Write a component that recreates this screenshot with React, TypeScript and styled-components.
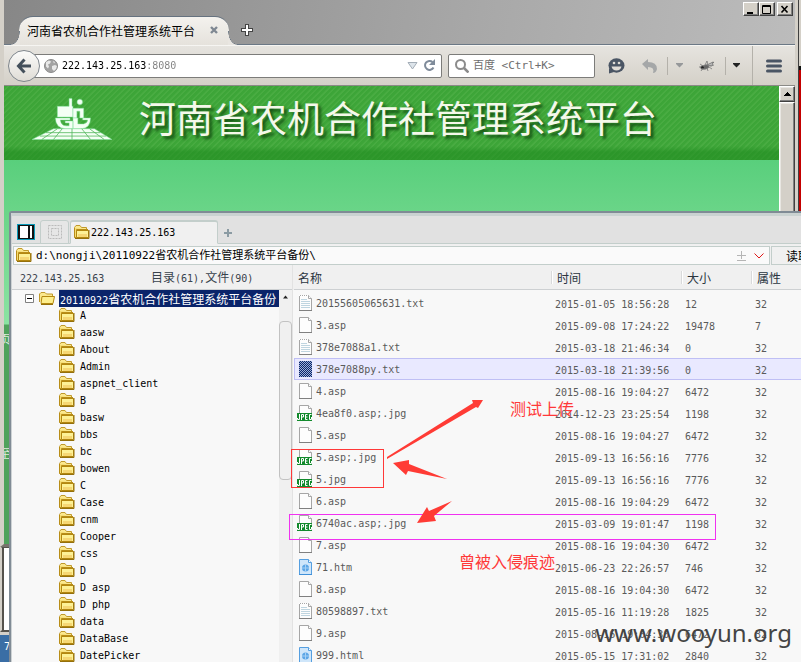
import React from "react";
import styled, { createGlobalStyle, css } from "styled-components";

const cjk = '"Noto Sans CJK SC", sans-serif';
const mono = `"DejaVu Sans Mono", ${cjk}`;

const GlobalStyle = createGlobalStyle`
  * { box-sizing: border-box; }
  html, body { margin: 0; padding: 0; height: 100%; }
  body { overflow: hidden; font: 12px/17px ${cjk}; color: #000; }
  #root { height: 100%; }
  button, input { font: inherit; color: inherit; margin: 0; padding: 0; border: 0; background: none; outline: none; }
  ul { list-style: none; margin: 0; padding: 0; }
`;

/* ---------- mixed script text ---------- */

const Latin = styled.span`
  font-family: ${mono};
  font-size: 10px;
`;

function Text({ children }: { children: string }) {
  return (
    <>
      {children.split(/([\x20-\x7f]+)/).map((run, i) =>
        i % 2 ? <Latin key={i}>{run}</Latin> : run
      )}
    </>
  );
}

/* ---------- desktop ---------- */

const Desktop = styled.div`
  position: relative;
  height: 100%;
  min-height: 100vh;
  overflow: hidden;
  background: #d4d0c8;
`;

const ConsoleWindow = styled.div`
  position: absolute;
  top: 0;
  right: 0;
  width: 3px;
  height: 220px;
  background: linear-gradient(#d4d0c8 66px, #111 66px 70px, #c40000 70px);
`;

const BackWindow = styled.div`
  position: absolute;
  top: 546px;
  left: 0;
  width: 60px;
  bottom: 30px;
  border: 2px solid #55524c;
  border-left: 2px solid #d4d0c8;
  box-shadow: inset 2px 0 #55524c;
  background: #fff;
`;

const Taskbar = styled.div`
  position: absolute;
  left: 0;
  right: 0;
  bottom: 0;
  height: 27px;
  padding: 1px 0 0 4px;
  background: #3a6ea5;
  color: #fff;
`;

/* ---------- browser ---------- */

const Browser = styled.section`
  position: absolute;
  top: 0;
  left: 0;
  right: 3px;
  height: 547px;
  display: flex;
  flex-direction: column;
  border-left: 4px solid #d4d0c8;
  border-right: 3px solid #d4d0c8;
  border-bottom: 3px solid #77736c;
  box-shadow: 1px 0 #404040;
  background: #d4d0c8;
`;

const TabStrip = styled.header`
  display: flex;
  height: 45px;
  padding: 16px 2px 0 15px;
  border-bottom: 1px solid #6b7885;
  background: linear-gradient(100deg, #878787, #a8a8a8 60%, #bcbcbc);
`;

const BrowserTab = styled.div`
  position: relative;
  display: flex;
  align-items: center;
  justify-content: space-between;
  width: 210px;
  height: 29px;
  padding: 0 8px 2px 8px;
  border-top: 1px solid #66727f;
  border-radius: 14px 14px 0 0;
  background: linear-gradient(#f4f2ee, #e5e2dc);
  &::before,
  &::after {
    content: "";
    position: absolute;
    bottom: 0;
    width: 9px;
    height: 14px;
  }
  &::before {
    left: -8px;
    background: radial-gradient(ellipse 9px 14px at 0 0, transparent 92%, #66727f 94%, #e9e6e1 100%);
  }
  &::after {
    right: -8px;
    background: radial-gradient(ellipse 9px 14px at 100% 0, transparent 92%, #66727f 94%, #e9e6e1 100%);
  }
`;

const IconButton = styled.button<{ $w: number }>`
  display: flex;
  flex: none;
  align-items: center;
  justify-content: center;
  width: ${(p) => p.$w}px;
`;

const WindowButtons = styled.div`
  display: flex;
  margin: -14px 0 0 auto;
  height: 14px;
`;

const WindowButton = styled.button<{ $apart?: boolean }>`
  display: flex;
  align-items: center;
  justify-content: center;
  width: 16px;
  height: 14px;
  margin-left: ${(p) => (p.$apart ? 2 : 0)}px;
  background: #d4d0c8;
  border: 1px solid;
  border-color: #fff #404040 #404040 #fff;
  box-shadow: inset -1px -1px #808080;
`;

const Toolbar = styled.div`
  display: flex;
  align-items: center;
  height: 41px;
  padding-left: 4px;
  border-top: 1px solid #f6f5f2;
  border-bottom: 1px solid #8b8a86;
  background: linear-gradient(#e6e4df, #d4d0c8);
`;

const BackButton = styled.button`
  z-index: 1;
  display: flex;
  flex: none;
  align-items: center;
  justify-content: center;
  width: 32px;
  height: 32px;
  margin-right: -14px;
  border: 1px solid #7f868d;
  border-radius: 50%;
  background: linear-gradient(#fbfbfa, #dfdcd6);
`;

const Field = styled.div<{ $width?: number; $pad: number }>`
  display: flex;
  align-items: center;
  flex: ${(p) => (p.$width ? `0 0 ${p.$width}px` : "1 1 0")};
  min-width: 0;
  height: 24px;
  margin-right: 6px;
  padding: 0 4px 0 ${(p) => p.$pad}px;
  border: 1px solid #7c7c7a;
  border-radius: 2px;
  background: #fff;
`;

const UrlInput = styled.input`
  flex: 1;
  min-width: 0;
  margin-left: 4px;
  font: 10px/17px ${mono};
  color: transparent;
  background: linear-gradient(90deg, #000 84px, #808080 84px);
  -webkit-background-clip: text;
  background-clip: text;
`;

const SearchInput = styled.input`
  flex: 1;
  min-width: 0;
  margin-left: 4px;
  font: 11px/17px ${mono};
  &::placeholder {
    color: #6e6e6e;
    opacity: 1;
  }
`;

const Divider = styled.span<{ $h: number; $gap?: number }>`
  flex: none;
  width: 1px;
  height: ${(p) => p.$h}px;
  margin-left: ${(p) => p.$gap ?? 0}px;
  background: #b4b1aa;
`;

const Viewport = styled.div`
  display: flex;
  flex: 1;
  min-height: 0;
`;

const WebPage = styled.main`
  display: flex;
  flex-direction: column;
  flex: 1;
  min-width: 0;
  background: linear-gradient(#59cf7c 74px, #6ad588 126px, #8be3a2 238px, #4fa25c 239px);
`;

const Banner = styled.div`
  display: flex;
  flex: none;
  align-items: center;
  height: 74px;
  padding: 0 0 8px 28px;
  background:
    linear-gradient(transparent 60px, rgba(30, 138, 30, 0.55) 66px),
    repeating-linear-gradient(135deg, #3da538 0 2px, #49ac42 3px 4px);
`;

const BannerTitle = styled.h1`
  margin: 0 0 0 27px;
  padding-bottom: 4px;
  font: 400 37px/44px ${cjk};
  white-space: nowrap;
  color: #f4f8ea;
  text-shadow: 3px 3px 3px rgba(10, 60, 10, 0.8);
`;

const SideMenu = styled.ul`
  margin-top: 170px;
  width: 6px;
  overflow: hidden;
  color: #dfe9dd;
  li {
    height: 114px;
    text-indent: -5px;
    white-space: nowrap;
  }
`;

const PageScroll = styled.div`
  display: flex;
  flex-direction: column;
  width: 16px;
  background: #ebe9e4;
`;

const Bevel = styled.button<{ $grow?: boolean }>`
  display: flex;
  align-items: center;
  justify-content: center;
  flex: ${(p) => (p.$grow ? "1" : "0 0 16px")};
  background: #d4d0c8;
  border: 1px solid;
  border-color: #fff #404040 #404040 #fff;
  box-shadow: inset -1px -1px #808080, inset 1px 1px #e8e6e1;
`;

/* ---------- file manager ---------- */

const Manager = styled.section`
  position: absolute;
  top: 211px;
  left: 9px;
  right: 0;
  bottom: 0;
  display: flex;
  flex-direction: column;
  overflow: hidden;
  border: solid #808b95;
  border-width: 2px 0 0 2px;
  border-top-left-radius: 3px;
  background: #f0f0f0;
`;

const ManagerInner = styled.div`
  display: flex;
  flex-direction: column;
  flex: 1;
  min-height: 0;
  border-top: 3px solid #cad2d1;
  border-left: 1px solid #cdd2d4;
`;

const ManagerTabs = styled.div`
  display: flex;
  flex: none;
  align-items: flex-end;
  height: 28px;
  padding-left: 5px;
  background: linear-gradient(#c3cecb, #c3cecb) bottom / 100% 1px no-repeat #e1e1e1;
`;

const SideToggle = styled.button`
  display: flex;
  width: 18px;
  height: 16px;
  margin: 0 5px 4px 0;
  border: 1px solid #0a9ab8;
`;

const ManagerTab = styled.button<{ $active?: boolean }>`
  display: flex;
  align-items: center;
  justify-content: ${(p) => (p.$active ? "flex-start" : "center")};
  width: ${(p) => (p.$active ? 148 : 29)}px;
  height: 24px;
  margin-right: ${(p) => (p.$active ? 0 : 1)}px;
  padding: 0 0 0 ${(p) => (p.$active ? 3 : 0)}px;
  gap: 1px;
  border: 1px solid #c3cecb;
  border-bottom-color: ${(p) => (p.$active ? "#f0f0f0" : "#c3cecb")};
  border-top-width: ${(p) => (p.$active ? 2 : 1)}px;
  border-radius: 3px 3px 0 0;
  background: ${(p) => (p.$active ? "#f0f0f0" : "#e6e6e6")};
`;

const PathRow = styled.div`
  display: flex;
  flex: none;
  gap: 1px;
  height: 19px;
  margin-top: 2px;
`;

const PathBox = styled.div`
  display: flex;
  flex: 1;
  align-items: center;
  min-width: 0;
  margin-left: 1px;
  padding: 0 1px 0 2px;
  border: 1px solid #c3cecb;
  background: #fafafa;
`;

const PathInput = styled.input`
  flex: 1;
  min-width: 0;
  margin-left: 4px;
  font: 11px/17px ${mono};
`;

const ReadButton = styled.button`
  flex: none;
  width: 30px;
  padding-left: 14px;
  overflow: hidden;
  white-space: nowrap;
  text-align: left;
  border: 1px solid #c3cecb;
  border-width: 1px 0 1px 1px;
  background: #f0f0f0;
`;

const Panes = styled.div`
  display: flex;
  flex: 1;
  min-height: 0;
`;

const TreePane = styled.div`
  display: flex;
  flex-direction: column;
  flex: none;
  width: 281px;
  border-right: 1px solid #e2e2e2;
`;

const TreeHeader = styled.div`
  display: flex;
  flex: none;
  align-items: center;
  height: 25px;
  padding-left: 8px;
  border-bottom: 1px solid #cdd0d2;
  color: #38424c;
  > span:first-child {
    width: 131px;
  }
`;

const TreeBody = styled.div`
  display: flex;
  flex: 1;
  min-height: 0;
  background: #f8f8f8;
`;

const Tree = styled.ul`
  flex: 1;
  min-width: 0;
  overflow: hidden;
`;

const TreeItem = styled.button<{ $root?: boolean }>`
  display: flex;
  align-items: center;
  width: 100%;
  height: 17px;
  padding-left: ${(p) => (p.$root ? 13 : 47)}px;
  gap: 5px;
  white-space: nowrap;
`;

const Selected = styled.span`
  flex: 1;
  height: 17px;
  margin-left: -1px;
  padding-left: 1px;
  text-align: left;
  color: #fff;
  background: #0a246a;
`;

const TreeScroll = styled.div`
  display: flex;
  flex-direction: column;
  align-items: center;
  flex: none;
  width: 13px;
  padding-top: 5px;
  gap: 22px;
  background: #f0f0f0;
`;

const TreeThumb = styled.div`
  width: 13px;
  height: 159px;
  border: 1px solid #c2c2c2;
  border-radius: 4px;
  background: #f0f0f0;
`;

const ListPane = styled.div`
  flex: 1;
  min-width: 0;
  overflow: hidden;
  padding-left: 1px;
  background: linear-gradient(#f0f0f0 25px, #f8f8f8 25px);
`;

const FileTable = styled.table`
  width: 100%;
  table-layout: fixed;
  border-collapse: separate;
  border-spacing: 0;
  tbody::before {
    content: "";
    display: block;
    height: 2px;
  }
`;

const HeadCell = styled.th<{ $width?: number }>`
  width: ${(p) => (p.$width ? `${p.$width}px` : "auto")};
  height: 25px;
  padding: 0 0 0 4px;
  text-align: left;
  font-weight: 400;
  color: #2b353f;
  border-bottom: 1px solid #cdd0d2;
  ${(p) =>
    p.$width &&
    css`
      padding-left: 6px;
      background: linear-gradient(90deg, #d9dadb 1px, #fff 1px 2px, transparent 2px) 0 6px / 100% 13px no-repeat;
    `}
`;

const Row = styled.tr<{ $on: boolean }>`
  td {
    height: 22px;
    padding: 0 0 0 4px;
    line-height: 17px;
    white-space: nowrap;
    color: #5a5a5a;
    border: solid ${(p) => (p.$on ? "#bfbff5" : "transparent")};
    border-width: 1px 0;
    background: ${(p) => (p.$on ? "#e9e9ff" : "transparent")};
  }
  td:first-child {
    padding-left: 0;
    border-left-width: 1px;
  }
`;

const NameCell = styled.div`
  display: flex;
  align-items: center;
  gap: 4px;
  height: 20px;
`;

/* ---------- annotations ---------- */

const Frame = styled.div<{ $x: number; $y: number; $w: number; $h: number; $c: string }>`
  position: absolute;
  left: ${(p) => p.$x}px;
  top: ${(p) => p.$y}px;
  width: ${(p) => p.$w}px;
  height: ${(p) => p.$h}px;
  border: 1px solid ${(p) => p.$c};
  pointer-events: none;
`;

const Note = styled.div<{ $x: number; $y: number }>`
  position: absolute;
  left: ${(p) => p.$x}px;
  top: ${(p) => p.$y}px;
  font: 16px/20px ${cjk};
  color: #ff3838;
  white-space: nowrap;
`;

const Arrows = styled.svg`
  position: absolute;
  left: 380px;
  top: 395px;
  pointer-events: none;
`;

const Watermark = styled.div`
  position: absolute;
  right: 9px;
  bottom: 13px;
  font: 24px/32px "Noto Sans", sans-serif;
  color: #444;
`;

/* ---------- icons ---------- */

const Folder = () => (
  <svg width="16" height="16" viewBox="0 0 16 16" fill="none">
    <path d="M.5 12.500V2.500L2 .5h4L7.500 2.500H12.500v2" fill="#fbe88e" stroke="#c09a2c" />
    <path d="M.5 3v9.500h2V4.500H14" stroke="#b88d18" fill="#f5dc70" />
    <path d="M2.500 5.500h12v7h-12z" fill="#fdf196" stroke="#b3870f" />
    <path d="M4 9h9v3H4z" fill="#f6d774" />
    <path d="M1 13.500h14V5" stroke="#94700c" />
  </svg>
);

const OpenFolder = () => (
  <svg width="16" height="16" viewBox="0 0 16 16" fill="none">
    <path d="M.5 11V3L2 1.500h4L7.500 3H13.500v3" fill="#fbe88e" stroke="#c09a2c" />
    <path d="M3 5.500h12.500L14 12.500H2z" fill="#fdee8c" stroke="#b3870f" />
    <path d="M2 13.500h12" stroke="#94700c" />
  </svg>
);

type Kind = "txt" | "asp" | "jpg" | "htm" | "sel";

const FileIcon = ({ kind }: { kind: Kind }) => {
  if (kind === "sel")
    return (
      <svg width="17" height="18" viewBox="0 0 17 18" shapeRendering="crispEdges">
        <defs>
          <pattern id="checks" width="2" height="2" patternUnits="userSpaceOnUse">
            <path d="M0 0h2v2H0z" fill="#9dafd6" />
            <path d="M0 0h1v1H0zM1 1h1v1H1z" fill="#0a246a" />
          </pattern>
        </defs>
        <path d="M4 1h13v16H4z" fill="url(#checks)" />
      </svg>
    );
  const blue = kind === "htm";
  const line = blue ? "#559fe0" : "#a6a6a6";
  return (
    <svg width="17" height="18" viewBox="0 0 17 18" fill="none">
      <path d="M4.500 1.500h9l3 3v12h-12z" fill={blue ? "#cfe6fa" : "#fdfdfd"} stroke={line} />
      <path d="M13.500 1.500v3h3" fill="#fff" stroke={line} />
      <path d="M4 16.500h13" stroke={blue ? "#3f8fd8" : "#808080"} />
      {kind === "txt" && (
        <>
          <path d="M6 5.500h6M6 7.500h9M6 9.500h9M6 11.500h9M6 13.500h9" stroke="#bfd5e0" />
          <path d="M4 1.500h9" stroke="#fff" strokeDasharray="1 1" />
        </>
      )}
      {blue && (
        <>
          <circle cx="10.500" cy="10" r="3.500" fill="#5ba5e6" />
          <path d="M7 10h7M10.500 6.500v7" stroke="#a5d0f5" />
        </>
      )}
      {kind === "jpg" && (
        <>
          <path d="M2 9h15v8H2z" fill="#128a2c" />
          <path
            d="M4.500 10v5.500h-2v-1.500M6.500 16v-5.500h2v2.500h-2M12.500 10.500h-2v5h2M10.500 13h2M16.500 10.500h-2v5h2v-2.500"
            stroke="#fff"
          />
        </>
      )}
    </svg>
  );
};

const Logo = () => (
  <svg width="80" height="44" viewBox="0 0 82 44" fill="#f4fff5" stroke="#7fe39c" strokeWidth="0.500">
    <path d="M26 9h12V1h3v8h1v11H26z" />
    <path d="M42 11h11v10h-4v-7h-3v7h-4z" />
    <circle cx="49" cy="4.500" r="2.800" />
    <path d="M24 21h15v2H29q1 6 6 6h3v-3h-4v-2h8v8H34q-10-1-10-11zM42 21h5v6h6q4-1 4-4h-5v-2h8q0 10-9 11h-9z" />
    <path d="M22 32h42l18 11H0z" />
    <path
      d="M14 36h56M8 39.500h68M31 32L22 43M41 32v11M51 32l9 11M59 32l15 11M26 32L10 43"
      fill="none"
      stroke="#4fb458"
      strokeWidth="0.800"
    />
  </svg>
);

const Caret = ({ color }: { color: string }) => (
  <svg width="9" height="5" viewBox="0 0 9 5">
    <path d="M1 0h7v1L4.500 4.500 1 1z" fill={color} />
  </svg>
);

const UpArrow = () => (
  <svg width="7" height="4" viewBox="0 0 7 4" shapeRendering="crispEdges">
    <path d="M3 0h1v1h1v1h1v1h1v1H0V3h1V2h1V1h1z" fill="#000" />
  </svg>
);

/* ---------- data ---------- */

const folders = [
  "A", "aasw", "About", "Admin", "aspnet_client", "B", "basw", "bbs", "bc", "bowen", "C",
  "Case", "cnm", "Cooper", "css", "D", "D asp", "D php", "data", "DataBase", "DatePicker",
];

const files: [Kind, string, string, string, string][] = [
  ["txt", "20155605065631.txt", "2015-01-05 18:56:28", "12", "32"],
  ["asp", "3.asp", "2015-09-08 17:24:22", "19478", "7"],
  ["txt", "378e7088a1.txt", "2015-03-18 21:46:34", "0", "32"],
  ["sel", "378e7088py.txt", "2015-03-18 21:39:56", "0", "32"],
  ["asp", "4.asp", "2015-08-16 19:04:27", "6472", "32"],
  ["jpg", "4ea8f0.asp;.jpg", "2014-12-23 23:25:54", "1198", "32"],
  ["asp", "5.asp", "2015-08-16 19:04:27", "6472", "32"],
  ["jpg", "5.asp;.jpg", "2015-09-13 16:56:16", "7776", "32"],
  ["jpg", "5.jpg", "2015-09-13 16:56:16", "7776", "32"],
  ["asp", "6.asp", "2015-08-16 19:04:29", "6472", "32"],
  ["jpg", "6740ac.asp;.jpg", "2015-03-09 19:01:47", "1198", "32"],
  ["asp", "7.asp", "2015-08-16 19:04:30", "6472", "32"],
  ["htm", "71.htm", "2015-06-23 22:26:57", "746", "32"],
  ["asp", "8.asp", "2015-08-16 19:04:30", "6472", "32"],
  ["txt", "80598897.txt", "2015-05-16 11:19:28", "1825", "32"],
  ["asp", "9.asp", "2015-08-16 19:04:30", "6472", "32"],
  ["htm", "999.html", "2015-05-15 17:31:02", "2840", "32"],
];

/* ---------- app ---------- */

function BrowserWindow() {
  return (
    <Browser>
      <TabStrip>
        <BrowserTab>
          <span>河南省农机合作社管理系统平台</span>
          <IconButton $w={14} aria-label="关闭标签页">
            <svg width="8" height="8" viewBox="0 0 8 8">
              <path d="M1 1l6 6M7 1L1 7" stroke="#7f8892" strokeWidth="2.400" />
            </svg>
          </IconButton>
        </BrowserTab>
        <IconButton $w={36} aria-label="新建标签页">
          <svg width="12" height="12" viewBox="0 0 12 12">
            <path d="M6 0v12M0 6h12" stroke="#444" strokeWidth="4" />
            <path d="M6 1v10M1 6h10" stroke="#fff" strokeWidth="2" />
          </svg>
        </IconButton>
        <WindowButtons>
          <WindowButton aria-label="最小化">
            <svg width="10" height="9"><path d="M1 7h6v2H1z" /></svg>
          </WindowButton>
          <WindowButton aria-label="最大化">
            <svg width="10" height="9" fill="none" stroke="#000">
              <path d="M.5 .5h8v8h-8zM0 1.500h9" />
            </svg>
          </WindowButton>
          <WindowButton $apart aria-label="关闭">
            <svg width="10" height="9"><path d="M1.500 1l6 6.500M7.500 1l-6 6.500" stroke="#000" strokeWidth="1.600" /></svg>
          </WindowButton>
        </WindowButtons>
      </TabStrip>
      <Toolbar>
        <BackButton aria-label="后退">
          <svg width="16" height="16" viewBox="0 0 16 16" fill="none" stroke="#44505c" strokeWidth="3">
            <path d="M8.500 1.500L2.500 8l6 6.500M3 8h12" />
          </svg>
        </BackButton>
        <Field $pad={17}>
          <svg width="14" height="14" viewBox="0 0 14 14">
            <circle cx="7" cy="7" r="6.500" fill="#a3a3a3" stroke="#8b8b8b" />
            <path d="M2 3l3-1.500 2 1-1 2-2 1 1 2-1 2-2-2zM8 7l3-1 2 1-1 3-2 2-2-2zM9 2l2 1-1 1.500z" fill="#e9e9e9" />
          </svg>
          <UrlInput aria-label="地址" defaultValue="222.143.25.163:8080" />
          <IconButton $w={18} aria-label="历史记录">
            <svg width="11" height="8" viewBox="0 0 11 8">
              <path d="M1 .5h9L5.500 7z" fill="#dde4ea" stroke="#a3adb7" />
            </svg>
          </IconButton>
          <IconButton $w={16} aria-label="刷新">
            <svg width="12" height="13" viewBox="0 0 12 13">
              <path d="M9.500 3A4.500 4.500 0 1 0 10.500 8.500" fill="none" stroke="#7f8b9a" strokeWidth="2" />
              <path d="M12 0v6H6z" fill="#7f8b9a" />
            </svg>
          </IconButton>
        </Field>
        <Field $pad={6} $width={147}>
          <svg width="14" height="14" viewBox="0 0 14 14" fill="none" stroke="#8b8b8b">
            <circle cx="5.500" cy="5.500" r="4.500" strokeWidth="2" />
            <path d="M9 9l4.500 4.500" strokeWidth="2.600" />
          </svg>
          <SearchInput aria-label="搜索" placeholder="百度 <Ctrl+K>" />
        </Field>
        <IconButton $w={30} aria-label="聊天">
          <svg width="17" height="16" viewBox="0 0 17 16">
            <ellipse cx="8.500" cy="7.500" rx="8" ry="7.200" fill="#4a5564" />
            <path d="M1 10v5.500l5-1.500z" fill="#4a5564" />
            <path d="M3.500 8.500h10q-1 4-5 4t-5-4z" fill="#dfdcd6" />
            <circle cx="6" cy="5" r="1.300" fill="#dfdcd6" />
            <circle cx="11" cy="5" r="1.300" fill="#dfdcd6" />
          </svg>
        </IconButton>
        <IconButton $w={36} aria-label="撤销">
          <svg width="15" height="14" viewBox="0 0 15 14">
            <path d="M0 5l6-5v3q9 0 9 7-1 4-4 4 2-6-5-6v3z" fill="#a5a7a8" />
          </svg>
        </IconButton>
        <Divider $h={18} />
        <IconButton $w={22} aria-label="撤销列表"><Caret color="#96989a" /></IconButton>
        <IconButton $w={35} aria-label="工具">
          <svg width="17" height="14" viewBox="0 0 17 14" stroke="#777" strokeWidth="0.800" fill="none">
            <ellipse cx="6.500" cy="8" rx="3.500" ry="2" fill="#666" transform="rotate(-15 6.500 8)" />
            <circle cx="3.500" cy="8.500" r="1.800" fill="#222" />
            <path d="M6 6L8 2l1 4 6-3-4 4 4-1M1 5l3 2M0 8h2M2 12l2-3M9 12L8 9M13 10l-3-2" />
            <path d="M8 6l6-3-1 4z" fill="#bbb" />
          </svg>
        </IconButton>
        <Divider $h={18} />
        <IconButton $w={21} aria-label="工具列表"><Caret color="#222" /></IconButton>
        <Divider $h={39} $gap={5} />
        <IconButton $w={42} aria-label="菜单">
          <svg width="16" height="14" viewBox="0 0 16 14" stroke="#4a5564" strokeWidth="3" strokeLinecap="round">
            <path d="M1.500 2h13M1.500 7h13M1.500 12h13" />
          </svg>
        </IconButton>
      </Toolbar>
      <Viewport>
        <WebPage>
          <Banner>
            <Logo />
            <BannerTitle>河南省农机合作社管理系统平台</BannerTitle>
          </Banner>
          <SideMenu>
            <li>页</li>
            <li>至</li>
          </SideMenu>
        </WebPage>
        <PageScroll>
          <Bevel aria-label="向上滚动"><UpArrow /></Bevel>
          <Bevel $grow aria-label="滚动条" />
        </PageScroll>
      </Viewport>
    </Browser>
  );
}

function FileManager() {
  return (
    <Manager>
      <ManagerInner>
        <ManagerTabs>
          <SideToggle aria-label="侧栏">
            <svg width="16" height="14" shapeRendering="crispEdges">
              <path d="M0 0h16v14H0z" fill="#111" />
              <path d="M2 1h8v12H2zM12 1h2v12h-2z" fill="#fff" />
            </svg>
          </SideToggle>
          <ManagerTab aria-label="主页">
            <svg width="14" height="14" fill="none" stroke="#bbb" strokeDasharray="2 1">
              <path d="M.5 .5h13v13H.5zM3.500 3.500h7v7h-7z" />
            </svg>
          </ManagerTab>
          <ManagerTab $active>
            <Folder />
            <Text>222.143.25.163</Text>
          </ManagerTab>
          <IconButton $w={20} aria-label="新标签">
            <svg width="8" height="22" viewBox="0 0 8 22">
              <path d="M4 7v8M0 11h8" stroke="#8b9ba3" strokeWidth="2" />
            </svg>
          </IconButton>
        </ManagerTabs>
        <PathRow>
          <PathBox>
            <Folder />
            <PathInput aria-label="路径" defaultValue="d:\nongji\20110922省农机合作社管理系统平台备份\" />
            <IconButton $w={18} aria-label="上级目录">
              <svg width="9" height="10" stroke="#b5b5b5"><path d="M4.500 0v8M0 4.500h9M0 9.500h9" /></svg>
            </IconButton>
            <IconButton $w={18} aria-label="展开路径">
              <svg width="10" height="6" fill="none" stroke="#e01818"><path d="M.5 .5L5 5 9.500 .5" /></svg>
            </IconButton>
          </PathBox>
          <ReadButton>读取</ReadButton>
        </PathRow>
        <Panes>
          <TreePane>
            <TreeHeader>
              <span><Text>222.143.25.163</Text></span>
              <span><Text>目录(61),文件(90)</Text></span>
            </TreeHeader>
            <TreeBody>
              <Tree>
                <li>
                  <TreeItem $root>
                    <svg width="9" height="9" fill="#fff" stroke="#808080">
                      <path d="M.5 .5h8v8h-8z" />
                      <path d="M2 4.500h5" stroke="#000" />
                    </svg>
                    <OpenFolder />
                    <Selected><Text>20110922省农机合作社管理系统平台备份</Text></Selected>
                  </TreeItem>
                  <ul>
                    {folders.map((name) => (
                      <li key={name}>
                        <TreeItem>
                          <Folder />
                          <Text>{name}</Text>
                        </TreeItem>
                      </li>
                    ))}
                  </ul>
                </li>
              </Tree>
              <TreeScroll>
                <svg width="5" height="4" viewBox="0 0 7 4"><path d="M0 4l3.500-4L7 4z" fill="#222" /></svg>
                <TreeThumb />
              </TreeScroll>
            </TreeBody>
          </TreePane>
          <ListPane>
            <FileTable>
              <thead>
                <tr>
                  <HeadCell>名称</HeadCell>
                  <HeadCell $width={130}>时间</HeadCell>
                  <HeadCell $width={70}>大小</HeadCell>
                  <HeadCell $width={50}>属性</HeadCell>
                </tr>
              </thead>
              <tbody>
                {files.map(([kind, name, time, size, attr]) => (
                  <Row key={name} $on={kind === "sel"}>
                    <td>
                      <NameCell>
                        <FileIcon kind={kind} />
                        <Text>{name}</Text>
                      </NameCell>
                    </td>
                    <td><Text>{time}</Text></td>
                    <td><Text>{size}</Text></td>
                    <td><Text>{attr}</Text></td>
                  </Row>
                ))}
              </tbody>
            </FileTable>
          </ListPane>
        </Panes>
      </ManagerInner>
    </Manager>
  );
}

export default function App() {
  return (
    <Desktop>
      <GlobalStyle />
      <ConsoleWindow />
      <BackWindow />
      <Taskbar><Text>7</Text></Taskbar>
      <BrowserWindow />
      <FileManager />
      <Frame $x={291} $y={449} $w={93} $h={39} $c="#ff3838" />
      <Frame $x={289} $y={514} $w={427} $h={26} $c="#f032f0" />
      <Arrows width="110" height="135" viewBox="0 0 110 135" fill="#ff3b35">
        <path d="M7 62L93 8l-1-3h11l-5 8-2-1L7 64z" />
        <path d="M13 68l16-3v4l38 15-39-8-2 4z" />
        <path d="M37 128l10-16 2 4 23-10-18 15 2 5z" />
      </Arrows>
      <Note $x={510} $y={398}>测试上传</Note>
      <Note $x={459} $y={551}>曾被入侵痕迹</Note>
      <Watermark>www.wooyun.org</Watermark>
    </Desktop>
  );
}
